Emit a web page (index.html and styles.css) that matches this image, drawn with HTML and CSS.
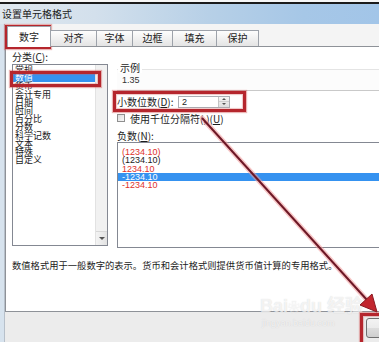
FILE: index.html
```html
<!DOCTYPE html>
<html>
<head>
    <meta charset="utf-8">
    <title>设置单元格格式</title>
    <link rel="stylesheet" href="styles.css">
</head>
<body>
<div class="shot">
    <div class="sheet-edge"></div>
    <div class="titlebar">设置单元格格式</div>

    <div class="frame">
        <div class="dialog">
            <div class="tabs">
                <div class="tab active">数字</div>
                <div class="tab w46">对齐</div>
                <div class="tab w36">字体</div>
                <div class="tab w40">边框</div>
                <div class="tab w44">填充</div>
                <div class="tab w42">保护</div>
            </div>

            <div class="panel">
                <div class="main">
                    <div class="left">
                        <div class="label">分类(<u>C</u>):</div>
                        <div class="catlist">
                            <div class="items">
                                <div>常规</div>
                                <div class="sel">数值</div>
                                <div>货币</div>
                                <div>会计专用</div>
                                <div>日期</div>
                                <div>时间</div>
                                <div>百分比</div>
                                <div>分数</div>
                                <div>科学记数</div>
                                <div>文本</div>
                                <div>特殊</div>
                                <div>自定义</div>
                            </div>
                            <div class="vscroll">
                                <div class="scroll-btn"><span class="tri-down"></span></div>
                            </div>
                        </div>
                    </div>

                    <div class="right">
                        <div class="sample">
                            <div class="sample-label">示例</div>
                            <div class="sample-box">1.35</div>
                        </div>

                        <div class="decimals">
                            <span class="dec-label">小数位数(<u>D</u>):</span>
                            <div class="spin">
                                <span class="spin-val">2</span>
                                <span class="spin-btns">
                                    <span class="spin-up"><span class="tri-up"></span></span>
                                    <span class="spin-down"><span class="tri-down small"></span></span>
                                </span>
                            </div>
                        </div>

                        <div class="check"><span class="box"></span>使用千位分隔符(,)(<u>U</u>)</div>

                        <div class="label neg-label">负数(<u>N</u>):</div>
                        <div class="neglist">
                            <div class="red">(1234.10)</div>
                            <div>(1234.10)</div>
                            <div class="red">1234.10</div>
                            <div class="sel">-1234.10</div>
                            <div class="red">-1234.10</div>
                        </div>
                    </div>
                </div>

                <p class="desc">数值格式用于一般数字的表示。货币和会计格式则提供货币值计算的专用格式。</p>
            </div>

            <div class="footer">
                <div class="btn"></div>
            </div>
        </div>
    </div>

    <!-- watermark -->
    <div class="watermark">
        <div class="wm-big">Bai<span class="paw">❀</span>du 经验</div>
        <div class="wm-small">jingyan.baidu.com</div>
    </div>

    <!-- red annotations -->
    <div class="mark mark-tab"></div>
    <div class="mark mark-item"></div>
    <div class="mark mark-dec"></div>
    <div class="mark mark-btn"></div>

    <svg class="arrow" width="379" height="342" viewBox="0 0 379 342">
        <line x1="202" y1="118" x2="367" y2="300" stroke="#f29a9a" stroke-opacity="0.55" stroke-width="5" stroke-linecap="round"/>
        <line x1="202" y1="118" x2="367" y2="300" stroke="#6e1826" stroke-width="2"/>
        <polygon points="377,312 360,305 372,294" fill="#c2262e" stroke="#8a1a22" stroke-width="1"/>
    </svg>
</div>
</body>
</html>
```

FILE: styles.css
```css
* {
    box-sizing: border-box;
}

html, body {
    margin: 0;
    padding: 0;
    width: 100%;
    height: 100%;
    overflow: hidden;
    background: #f0f0f0;
}

body {
    font-family: "Noto Sans CJK SC", "Noto Sans", sans-serif;
    font-size: 10px;
    color: #1c1c1c;
}

.shot {
    position: relative;
    width: 379px;
    height: 342px;
    overflow: hidden;
}

.sheet-edge {
    height: 4px;
    background: #f6f6f6;
    border-bottom: 2px solid #1b1b1b;
}

.titlebar {
    height: 20px;
    line-height: 19px;
    padding-left: 2px;
    white-space: nowrap;
    background: linear-gradient(to right, #dfe7ee 0%, #d3e0ec 25%, #b7d0e7 55%, #a6c7e7 80%, #a2c5e8 100%);
}

.frame {
    display: flex;
    height: 318px;
    padding-left: 4px;
    background: #d7e3ee;
}

.dialog {
    flex: none;
    width: 440px;
    display: flex;
    flex-direction: column;
    background: #f4f4f4;
    border-left: 1px solid #b7c0ca;
}

/* tabs */
.tabs {
    display: flex;
    align-items: flex-end;
    height: 22px;
    padding-left: 2px;
    position: relative;
    z-index: 1;
}

.tab {
    height: 16px;
    line-height: 14px;
    text-align: center;
    border: 1px solid #9da2aa;
    border-left: none;
    border-bottom: none;
    background: linear-gradient(#fdfdfd, #e4e4e4);
}

.tab.active {
    width: 44px;
    height: 21px;
    line-height: 20px;
    margin-bottom: -1px;
    border-left: 1px solid #9da2aa;
    background: #fff;
}

.w46 { width: 46px; }
.w36 { width: 36px; }
.w40 { width: 40px; }
.w44 { width: 44px; }
.w42 { width: 42px; }

/* panel */
.panel {
    height: 266px;
    padding: 4px 0 0 6px;
    background: #fff;
    border: 1px solid #8e9298;
    display: flex;
    flex-direction: column;
}

.main {
    display: flex;
    gap: 9px;
}

.left {
    width: 96px;
    flex: none;
}

.label {
    height: 11px;
    line-height: 11px;
    white-space: nowrap;
}

.catlist {
    margin-top: 2px;
    height: 182px;
    border: 1px solid #848892;
    display: flex;
}

.items {
    flex: 1;
    padding-top: 1px;
    font-size: 9px;
    line-height: 8.2px;
}

.items div {
    padding-left: 2px;
    white-space: nowrap;
}

.items .sel {
    background: #3592f0;
    color: #fff;
}

.vscroll {
    width: 12px;
    background: #f1f1f1;
    border-left: 1px solid #e2e2e2;
    display: flex;
    flex-direction: column;
    justify-content: flex-end;
}

.scroll-btn {
    height: 14px;
    display: flex;
    align-items: center;
    justify-content: center;
    background: linear-gradient(to right, #f4f4f4, #e2e2e2);
    border-top: 1px solid #d8d8d8;
}

.tri-down {
    width: 0;
    height: 0;
    border-left: 3px solid transparent;
    border-right: 3px solid transparent;
    border-top: 3px solid #555;
}

.tri-up {
    width: 0;
    height: 0;
    border-left: 2px solid transparent;
    border-right: 2px solid transparent;
    border-bottom: 2px solid #555;
}

.tri-down.small {
    border-left-width: 2px;
    border-right-width: 2px;
    border-top-width: 2px;
}

/* right column */
.right {
    flex: 1;
}

.sample {
    margin-top: 11px;
}

.sample-label {
    position: relative;
    z-index: 1;
    width: fit-content;
    height: 11px;
    line-height: 11px;
    margin-left: 1px;
    padding: 0 2px;
    background: #fff;
}

.sample-box {
    margin-top: -4px;
    height: 22px;
    padding-left: 5px;
    line-height: 20px;
    font-family: "Liberation Sans", sans-serif;
    font-size: 9px;
    color: #333;
    background: #fcfcfc;
    border-top: 1px solid #e4e4e4;
    border-bottom: 1px solid #c9c9c9;
}

.decimals {
    margin-top: 3px;
    height: 15px;
    display: flex;
    align-items: center;
}

.dec-label {
    width: 61px;
    white-space: nowrap;
}

.spin {
    width: 52px;
    height: 12px;
    display: flex;
    border: 1px solid #abadb3;
    background: #fff;
}

.spin-val {
    flex: 1;
    padding-left: 3px;
    line-height: 10px;
    font-family: "Liberation Sans", sans-serif;
    font-size: 9px;
}

.spin-btns {
    width: 11px;
    display: flex;
    flex-direction: column;
    border-left: 1px solid #c4c4c4;
    background: linear-gradient(#f6f6f6, #dedede);
}

.spin-up, .spin-down {
    flex: 1;
    display: flex;
    align-items: center;
    justify-content: center;
}

.spin-up {
    border-bottom: 1px solid #cfcfcf;
}

.check {
    margin-top: 3px;
    height: 12px;
    display: flex;
    align-items: center;
    white-space: nowrap;
}

.check .box {
    width: 8px;
    height: 8px;
    margin-right: 5px;
    border: 1px solid #8f8f8f;
    background: linear-gradient(135deg, #dcdcdc, #f8f8f8);
}

.neg-label {
    margin-top: 6px;
}

.neglist {
    margin-top: 1px;
    height: 106px;
    padding-top: 5px;
    border: 1px solid #848892;
    font-family: "Liberation Sans", sans-serif;
    font-size: 9px;
    line-height: 8.3px;
}

.neglist div {
    padding-left: 4px;
}

.neglist .red {
    color: #e0322c;
}

.neglist .sel {
    background: #3592f0;
    color: #fff;
}

.desc {
    margin: 11px 0 0 0;
    line-height: 12px;
    font-size: 9.3px;
    white-space: nowrap;
}

/* footer */
.footer {
    flex: 1;
    display: flex;
    justify-content: flex-end;
    padding: 6px 18px 0 0;
    background: #ececec;
}

.btn {
    width: 60px;
    height: 20px;
    border: 1px solid #707070;
    border-radius: 3px;
    background: linear-gradient(#f3f3f3, #ebebeb 50%, #dddddd 51%, #cfcfcf);
}

/* watermark */
.watermark {
    position: absolute;
    left: 260px;
    top: 296px;
    color: rgba(255, 255, 255, 0.7);
    text-shadow: 0 0 1px rgba(120, 120, 120, 0.3);
    pointer-events: none;
}

.wm-big {
    font-family: "Liberation Sans", "Noto Sans CJK SC", sans-serif;
    font-size: 18px;
    font-weight: bold;
    line-height: 20px;
    white-space: nowrap;
}

.paw {
    font-size: 12px;
}

.wm-small {
    font-family: "Liberation Sans", sans-serif;
    font-size: 9px;
    line-height: 10px;
    padding-left: 2px;
}

/* red annotations */
.mark {
    position: absolute;
    border: 3px solid #b5262d;
    box-shadow: 0 0 1px 1px rgba(210, 90, 90, 0.45), inset 0 0 1px 1px rgba(210, 90, 90, 0.35);
    pointer-events: none;
}

.mark-tab {
    left: 5px;
    top: 25px;
    width: 46px;
    height: 24px;
}

.mark-item {
    left: 10px;
    top: 71px;
    width: 91px;
    height: 16px;
}

.mark-dec {
    left: 113px;
    top: 91px;
    width: 133px;
    height: 21px;
}

.mark-btn {
    left: 360px;
    top: 313px;
    width: 24px;
    height: 34px;
}

.arrow {
    position: absolute;
    left: 0;
    top: 0;
    pointer-events: none;
}
```
